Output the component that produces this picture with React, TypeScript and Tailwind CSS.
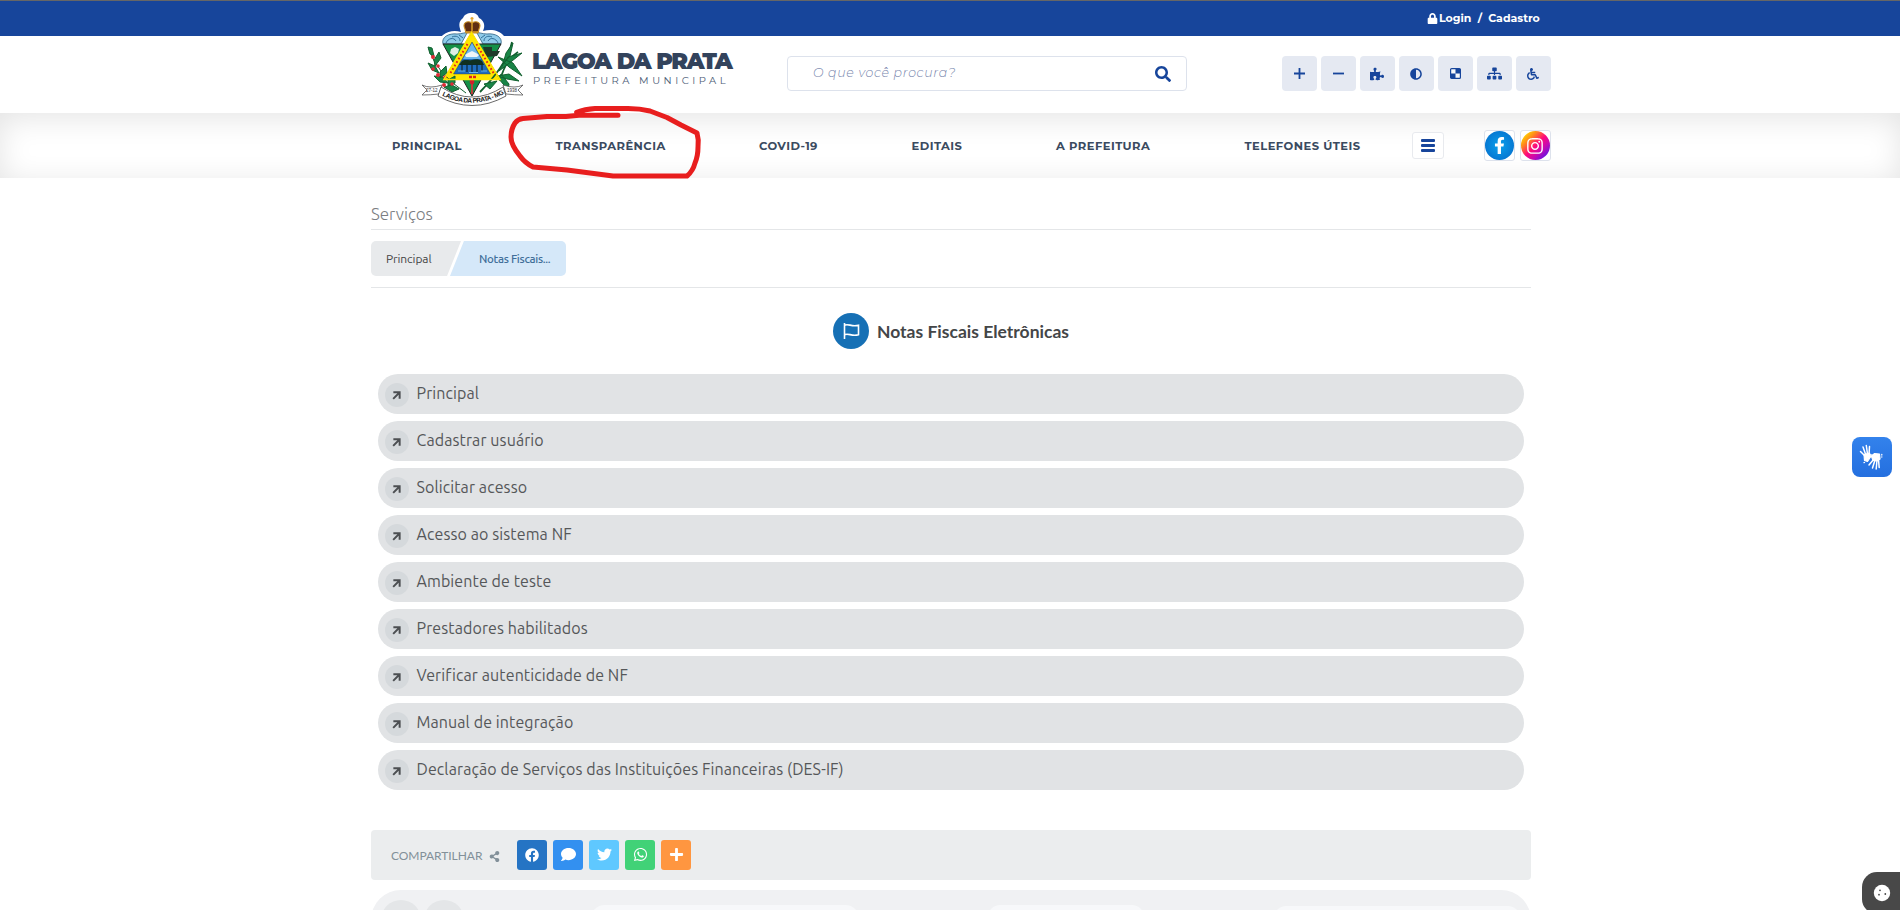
import React from "react";
import { FaLock, FaSearch, FaPlus, FaAdjust, FaSitemap, FaWheelchair, FaShareAlt, FaFacebook, FaComment, FaTwitter, FaWhatsapp, FaFacebookF, FaInstagram, FaPuzzlePiece } from "react-icons/fa";

const mont = "font-['Montserrat','Open_Sans',sans-serif]";
const ubuntu = "font-['Ubuntu','Noto_Sans',sans-serif]";
const lato = "font-['Lato',sans-serif]";

function Crest() {
  return (
    <svg width="104" height="97" viewBox="0 0 104 97" className="absolute left-[421px] top-[12px]">
      <path d="M51 1c4 0 6 2 7 5 4 2 6 6 5 10l-1 3c8-2 16-1 21 5 3 4 3 6 1 10L64 78H38L18 34c-2-4 0-8 4-11 5-4 12-5 18-3-2-6-3-10 2-14 1-3 4-5 9-5z" fill="#fff" />
      <path d="M22 32c-2-7 6-11 14-10 5 0 8-2 10-1l-6 11zM80 32c2-7-6-11-14-10-5 0-8-2-10-1l6 11z" fill="#8fcbea" stroke="#2c5f80" strokeWidth=".8" />
      <path d="M25 31c2-5 8-6 10-2M31 25c4-2 8 0 8 4M38 23l4 3M77 31c-2-5-8-6-10-2M71 25c-4-2-8 0-8 4M64 23l-4 3" fill="none" stroke="#2f6f98" strokeWidth="1" />
      <path d="M22 32h58L51 84z" fill="#149048" stroke="#222" strokeWidth="1" />
      <path d="M29 41l1-4 4-2 4 2-1 4-4 3z" fill="#dfeee4" />
      <path d="M62 35h9v4h8l-3 5-11 1z" fill="#1e3a2a" />
      <path d="M50.500 20.500L79 67.500H23z" fill="#ffe600" stroke="#6b5b00" strokeWidth=".6" />
      <path d="M51 30l18.500 32H32.500z" fill="#1f6cbd" stroke="#333" strokeWidth=".4" />
      <path d="M51 31l9 16H42z" fill="#6db8ea" />
      <path d="M44 43l3-2 4-2 4 2 3 2-2 2H45z" fill="#eef5f6" />
      <path d="M41 49c3-2 7 0 10-1s7-1 10 1l2 4H38z" fill="#10301f" />
      <path d="M41 52v7M46 52v8M51 52v8M56 52v8M61 52v7" stroke="#0c2431" strokeWidth="1.2" />
      <path d="M37 59h7m4 1.500h9m3-1.500h6" stroke="#7cc4ef" strokeWidth=".8" />
      <path d="M46.500 32L29.500 61M55.500 32l17 29" stroke="#e2251b" strokeWidth="2" strokeDasharray="1.800 2.200" />
      <path d="M48 65h7" stroke="#d9251c" strokeWidth="2.400" strokeDasharray="3 1" />
      <path d="M51 69v13" stroke="#d0383a" strokeWidth="1.800" />
      <circle cx="51" cy="70" r="2.400" fill="#d0202b" />
      <path d="M44 17c-3-6 2-9 7-6 5-3 10 0 7 6l-1 4H45z" fill="#5f2d12" stroke="#c98d22" strokeWidth="1.100" />
      <path d="M45 20h12M51 5v14M49.500 6.500h3" stroke="#e0a52d" strokeWidth="1.400" />
      <g stroke="#12602f" strokeWidth="1" fill="#188446">
        <path d="M8 37q7 24 37 44" fill="none" />
        <path d="M7 35l4 1 2 8-4-2zM18 40l2 6-6 8-1-6zM7 51l7 3 4 7-7-3zM25 54l1 7-7 5 0-6zM13 64l9 1 5 6-8-1zM34 64l0 7-7 3 0-6zM23 75l8-2 7 4-7 3z" />
        <path d="M91 30q-5 23-32 50M97 40q-13 8-18 29" fill="none" strokeWidth="1.800" />
        <path d="M77 45l15 6 9 13-13-9zM78 59l9-14 14-4-10 8zM76 64l12-2 10 7-12-2zM82 52l3-11 7-10-3 13zM80 62l8 10-1 6-9-11zM63 72l13-3-7 8z" />
      </g>
      <g fill="#e02a35">
        <circle cx="12" cy="45" r="2" /><circle cx="12" cy="57" r="1.800" /><circle cx="17" cy="54" r="1.800" /><circle cx="17" cy="63" r="2" /><circle cx="24" cy="65" r="1.800" /><circle cx="23" cy="73" r="2" /><circle cx="31" cy="72" r="1.800" />
      </g>
      <path d="M23 67.500L50.500 20.500 79 67.500z" fill="none" stroke="#ffe600" strokeWidth="1.500" />
      <path d="M1 73q8 4 20 0l-3 9q-9 1-17 1l5-5zM102 73q-8 4-20 0l3 9q9 1 17 1l-5-5z" fill="#fff" stroke="#555" strokeWidth=".8" />
      <path d="M20 75q31 20 62 0l3 9q-34 19-68 0z" fill="#fff" stroke="#444" strokeWidth=".8" />
      <path id="motto" d="M21 83.500q30 15 61-1" fill="none" />
      <text fontFamily="Liberation Sans" fontSize="6.500" fontWeight="700" fill="#111">
        <textPath href="#motto" textLength="65">LAGOA DA PRATA - MG</textPath>
      </text>
      <text x="5" y="80" fontFamily="Liberation Sans" fontSize="4.500" fill="#333">27-12</text>
      <text x="86" y="80" fontFamily="Liberation Sans" fontSize="4.500" fill="#333">1938</text>
    </svg>
  );
}

const Checker = () => (
  <svg width="11" height="11" viewBox="0 0 11 11"><rect x=".6" y=".6" width="9.8" height="9.8" rx="1" fill="#fff" fillOpacity=".7" stroke="#17459b" strokeWidth="1.2" /><path d="M5.5 1h5v4.500h-5zM1 5.500h4.500V10H1z" fill="#17459b" /></svg>
);

const Plus = () => (
  <svg width="11" height="11" viewBox="0 0 11 11"><path d="M5.5 0v11M0 5.500h11" stroke="#17459b" strokeWidth="1.800" /></svg>
);

const Minus = () => (
  <svg width="11" height="11" viewBox="0 0 11 11"><path d="M0 5.500h11" stroke="#17459b" strokeWidth="1.800" /></svg>
);

const Hands = () => (
  <svg width="40" height="40" viewBox="0 0 40 40" fill="none" stroke="#fff" strokeLinecap="round" strokeLinejoin="round">
    <path d="M13 19L8.500 14.500M13.500 17L11 10M15.500 17L14.300 8.500M17 17.500l.5-8" strokeWidth="1.500" />
    <path d="M12 17.500l5.500-1.500 1 4-3 4.500-3-1z" fill="#fff" strokeWidth="1.200" />
    <path d="M12.500 25.500l-2 .8" strokeWidth="1.300" strokeDasharray=".5 1.800" />
    <path d="M22.500 18.500l-5.500-.8M22 22l-5 6M23 23l-2.500 8M25 23l-.8 9M26.500 22.500l.7 8" strokeWidth="1.500" />
    <path d="M19.500 19.500l3-3 5 .5.500 5-3 2-4-.5z" fill="#fff" strokeWidth="1.200" />
    <path d="M29.800 17.500v2.500" strokeWidth="1.300" strokeDasharray=".5 1.800" />
  </svg>
);

const tools = [<Plus />, <Minus />, <FaPuzzlePiece size={14} />, <FaAdjust size={12} />, <Checker />, <FaSitemap size={15} />, <FaWheelchair size={12} />];

const nav = [
  { t: "PRINCIPAL", c: "w-[70px]" },
  { t: "TRANSPARÊNCIA", c: "w-[110px]" },
  { t: "COVID-19", c: "w-[59px]" },
  { t: "EDITAIS", c: "w-[51px]" },
  { t: "A PREFEITURA", c: "w-[95px]" },
  { t: "TELEFONES ÚTEIS", c: "w-[116px]" },
];

const services = ["Principal", "Cadastrar usuário", "Solicitar acesso", "Acesso ao sistema NF", "Ambiente de teste", "Prestadores habilitados", "Verificar autenticidade de NF", "Manual de integração", "Declaração de Serviços das Instituições Financeiras (DES-IF)"];

const share = [
  { c: "bg-[#2574c4]", i: <FaFacebook size={14} /> },
  { c: "bg-[#3390f0]", i: <FaComment size={15} /> },
  { c: "bg-[#5fc8ff]", i: <FaTwitter size={15} /> },
  { c: "bg-[#41d277]", i: <FaWhatsapp size={15} /> },
  { c: "bg-[#ff9640]", i: <FaPlus size={15} /> },
];

export default function App() {
  return (
    <div className="relative flex h-[910px] w-[1900px] flex-col overflow-hidden bg-white">
      <div className="h-9 shrink-0 border-t border-[#666] bg-[#17459b]">
        <div className={`ml-[1427px] flex h-[34px] items-center text-[11px] font-bold whitespace-pre text-white ${mont}`}>
          <FaLock size={11} className="mr-px" />
          <span>Login  /  Cadastro</span>
        </div>
      </div>

      <header className="flex h-[77px] shrink-0 pl-[532px]">
        <div className="w-[255px] pt-3">
          <div className={`h-[26px] text-[22.5px] leading-[27px] font-black tracking-[-1.55px] [word-spacing:1px] whitespace-nowrap text-[#33435c] ${mont}`}>LAGOA DA PRATA</div>
          <div className={`pl-px text-[10px] leading-[14px] tracking-[3.5px] whitespace-nowrap text-[#4c5b75] ${mont}`}>PREFEITURA MUNICIPAL</div>
        </div>
        <div className="mt-5 flex h-[35px] w-[400px] items-center justify-between rounded border border-[#dde2ec] pr-[15px] pl-[25px]">
          <span className={`text-[12.5px] font-light tracking-[0.7px] text-[#7886ad] italic ${mont}`}>O que você procura?</span>
          <FaSearch size={16} color="#17459b" />
        </div>
        <div className="mt-5 ml-[95px] flex h-[35px] gap-1">
          {tools.map((icon, i) => <div key={i} className="flex w-[35px] items-center justify-center rounded bg-[#e5e9f2] pr-px text-[#17459b]">{icon}</div>)}
        </div>
      </header>

      <nav className="flex h-[65px] shrink-0 items-center pl-[392px] shadow-[inset_0_5px_30px_rgba(0,0,0,0.11)]">
        <div className={`flex gap-[93.5px] pt-[2px] text-[11.5px] font-bold tracking-[0.47px] whitespace-nowrap text-[#3a4a60] ${mont}`}>
          {nav.map((n) => <div key={n.t} className={n.c}>{n.t}</div>)}
        </div>
        <div className="ml-[51px] flex h-[27px] w-8 flex-col items-center justify-center gap-[2px] rounded-[3px] border border-[#e8eaee] bg-white">
          <i className="h-[3px] w-[14px] rounded-[1px] bg-[#17459b]" /><i className="h-[3px] w-[14px] rounded-[1px] bg-[#17459b]" /><i className="h-[3px] w-[14px] rounded-[1px] bg-[#17459b]" />
        </div>
        <div className="ml-10 flex gap-[5px]">
          <div className="h-[31px] w-[31px] rounded-[3px] border border-[#dde2ec] bg-white"><div className="flex h-[29px] w-[29px] items-center justify-center rounded-full bg-[radial-gradient(circle,#0aa0ec,#0568c8)] text-white"><FaFacebookF size={17} /></div></div>
          <div className="h-[31px] w-[31px] rounded-[3px] border border-[#dde2ec] bg-white"><div className="flex h-[29px] w-[29px] items-center justify-center rounded-full bg-[linear-gradient(135deg,#ffd400_12%,#ff8a1a_28%,#ff0a7a_50%,#c80ab0_68%,#5b14e8_90%)] text-white"><FaInstagram size={18} /></div></div>
        </div>
      </nav>

      <main className="ml-[371px] flex w-[1160px] flex-col">
        <h2 className={`h-[52px] border-b border-[#e4e6e8] pt-[23px] text-[17px] leading-[26px] font-light text-[#7b7e82] ${ubuntu}`}>Serviços</h2>
        <div className={`flex h-[58px] border-b border-[#e4e6e8] pt-[11px] leading-[36px] ${ubuntu}`}>
          <div className="h-[35px] w-[90px] rounded-l-[5px] bg-[#e8eaec] pl-[15px] text-[12px] tracking-[-0.1px] text-[#444] [clip-path:polygon(0_0,100%_0,84.500%_100%,0_100%)]">Principal</div>
          <div className="-ml-[11px] h-[35px] w-[116px] rounded-r-[5px] bg-[#d5e8f9] pl-[29px] text-[11.5px] font-medium tracking-[-0.3px] whitespace-nowrap text-[#416f99] [clip-path:polygon(12%_0,100%_0,100%_100%,0_100%)]">Notas Fiscais...</div>
        </div>
        <div className="mt-[25px] flex h-9 items-center pl-[462px]">
          <div className="flex h-9 w-9 items-center justify-center rounded-full bg-[#1670b5]">
            <svg width="17" height="17" viewBox="0 0 17 17" fill="none" stroke="#fff" strokeWidth="1.600"><path d="M1.500 0v16M1.500 2.200c4-2 7 2 14 0v9.500c-7 2-10-2-14 0" /></svg>
          </div>
          <h1 className={`mt-[2px] ml-2 text-[17.5px] font-bold whitespace-nowrap text-[#444648] ${lato}`}>Notas Fiscais Eletrônicas</h1>
        </div>
        <ul className="mx-[7px] mt-[25px] flex flex-col gap-[7px]">
          {services.map((s) => (
            <li key={s} className={`flex h-10 items-center rounded-full bg-[#e1e3e5] pl-[7px] text-[16px] tracking-[0.1px] text-[#555759] ${ubuntu}`}>
              <span className="mt-[2px] flex h-6 w-6 items-center justify-center rounded-full bg-[#d5d9dc] pr-px">
                <svg width="9" height="9" viewBox="0 0 10 10" fill="none" stroke="#4c4f52" strokeWidth="2.200"><path d="M1.500 1.500h7v7M8.300 1.700l-7 7" /></svg>
              </span>
              <span className="ml-[7.5px] pb-[2px]">{s}</span>
            </li>
          ))}
        </ul>
        <div className="mt-10 flex h-[50px] items-center rounded bg-[#ebedee] pl-5">
          <span className={`mt-[2px] w-[98px] text-[12px] tracking-[-0.05px] text-[#829099] ${lato}`}>COMPARTILHAR</span>
          <FaShareAlt size={11} color="#829099" className="mt-[3px]" />
          <div className="ml-[17px] flex gap-[6px]">
            {share.map((s) => <div key={s.c} className={`flex h-[30px] w-[30px] items-center justify-center rounded-[3px] pb-px text-white ${s.c}`}>{s.i}</div>)}
          </div>
        </div>
        <div className="mt-[10px] flex h-[60px] shrink-0 rounded-full bg-[#f0f1f3] pt-[10px] pl-[10px]">
          <i className="h-10 w-10 rounded-full bg-[#e4e6e8]" />
          <i className="ml-[3px] h-10 w-10 rounded-full bg-[#e4e6e8]" />
          <i className="mt-[5px] ml-[126px] h-8 w-[270px] rounded-[15px] bg-[#f7f8fa]" />
          <i className="mt-[5px] ml-[128px] h-8 w-[156px] rounded-[12px] bg-[#f7f8fa]" />
          <i className="mt-[6px] ml-[130px] h-8 w-[246px] rounded-[12px] bg-[#f7f8fa]" />
        </div>
      </main>

      <Crest />
      <svg className="pointer-events-none absolute top-[100px] left-[500px]" width="210" height="84" fill="none" stroke="#e81e1e" strokeWidth="5" strokeLinecap="round" strokeLinejoin="round">
        <path d="M118 15.300H79L76.700 12.300Q85 9 95 8.500H128Q140 8.500 150 11L167 17.500 181 25 197 33Q199 40 198 47 198 56 195 63 193 71 187 76H113L90 73 67 70 33 67Q25 63 20 56 11 45 11 37 11 29 15 23 18 19 23 18.500L47 16.500H66L79 15.300" />
      </svg>
      <div className="absolute top-[437px] left-[1852px] h-10 w-10 rounded-lg bg-gradient-to-b from-[#3382ec] to-[#246fdf]"><Hands /></div>
      <div className="absolute top-[872px] left-[1862px] h-[42px] w-[38px] rounded-l-[15px] bg-[#484848]">
        <svg width="18" height="18" viewBox="0 0 18 18" className="mt-3 ml-[11px]"><circle cx="9" cy="9" r="8.200" fill="#fff" /><g fill="#484848"><circle cx="6" cy="10.700" r=".9" /><circle cx="12.300" cy="10" r=".9" /><circle cx="7" cy="6.300" r=".9" /></g></svg>
      </div>
    </div>
  );
}
